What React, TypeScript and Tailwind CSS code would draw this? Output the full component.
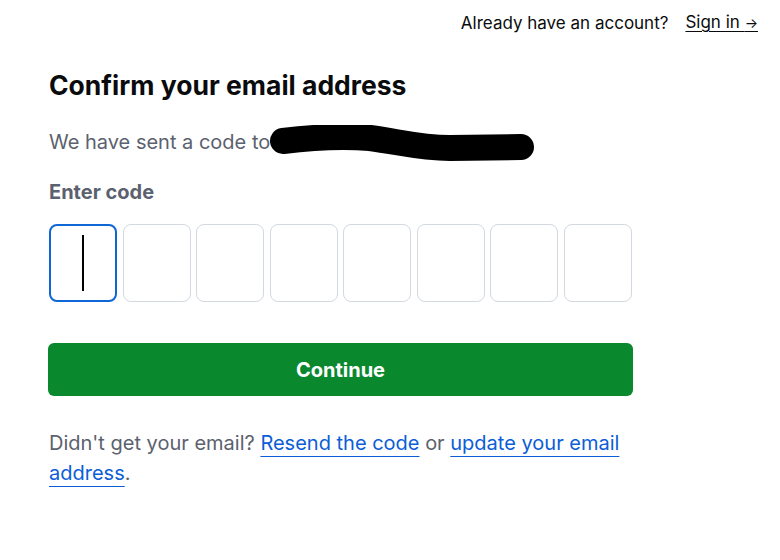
import React from "react";

export default function App() {
  const boxes = [0, 1, 2, 3, 4, 5, 6, 7];
  return (
    <div className="w-[780px] h-[560px] bg-white relative" style={{ fontFamily: 'Inter, "Liberation Sans", sans-serif' }}>
      <div className="flex justify-end items-center pt-[10px] pr-[22px] text-[17px] leading-[24px] text-[#0a0b0d]">
        <span>Already have an account?</span>
        <a className="ml-[17px] underline underline-offset-[3px] text-[#0a0b0d]">Sign in <span className="text-[14px]">→</span></a>
      </div>
      <div className="pl-[49px] w-[632px]">
        <h1 className="mt-[34px] text-[26.5px] font-bold leading-[32px] text-[#0a0b0d]">Confirm your email address</h1>
        <div className="relative mt-[29px] text-[20px] leading-[24px] text-[#5b616e]">
          We have sent a code to
          <svg className="absolute left-[-49px] top-[-5px]" width="560" height="50" viewBox="0 0 560 50">
            <path d="M283 16 C 315 12, 345 11, 370 13 C 400 17, 420 23, 450 23 L 521 22" stroke="#000" strokeWidth="26" fill="none" strokeLinecap="round" strokeLinejoin="round" />
          </svg>
        </div>
        <div className="mt-[26px] text-[20px] font-bold leading-[24px] text-[#5b616e]">Enter code</div>
        <div className="mt-[20px] flex gap-[5.6px]">
          {boxes.map((i) => (
            <div
              key={i}
              className={
                i === 0
                  ? "w-[68px] h-[78px] rounded-[8px] border-2 border-[#0f66d6] flex items-center justify-center"
                  : "w-[68px] h-[78px] rounded-[8px] border border-[#d3d9e0]"
              }
            >
              {i === 0 && <div className="w-[2px] h-[56px] bg-black" />}
            </div>
          ))}
        </div>
        <button className="mt-[41px] w-[585px] h-[53px] -ml-[1px] rounded-[6px] bg-[#0a882e] text-white text-[20px] font-bold">
          Continue
        </button>
        <p className="mt-[32px] text-[20px] leading-[30px] text-[#5b616e]">
          Didn't get your email?{" "}
          <a className="text-[#0b5ed7] underline underline-offset-[6px] decoration-1">Resend the code</a> or{" "}
          <a className="text-[#0b5ed7] underline underline-offset-[6px] decoration-1">update your email address</a>.
        </p>
      </div>
    </div>
  );
}
